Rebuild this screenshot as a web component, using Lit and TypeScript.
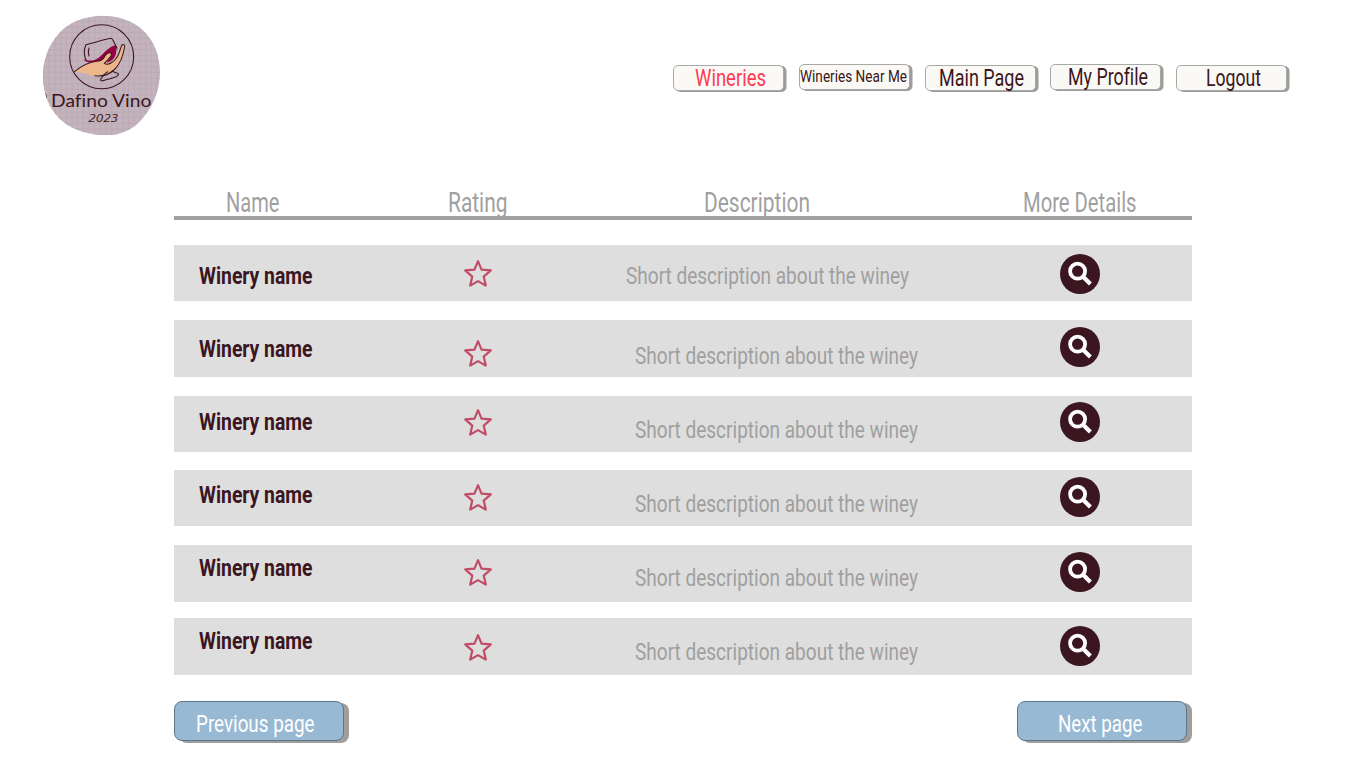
import { LitElement, html, svg, css } from "lit";
import { customElement, property } from "lit/decorators.js";
import { styleMap } from "lit/directives/style-map.js";

/** One line of condensed text, fitted to a given width. */
const label = (text: string, width: number, size: number, weight = 400) => html`
  <svg width=${width} height=${size} overflow="visible" style=${styleMap({ display: "block", fontSize: `${size}px`, fontWeight: `${weight}` })}>
    <text x="0" y=${size} textLength=${width} lengthAdjust="spacingAndGlyphs" fill="currentColor">${text}</text>
  </svg>`;

const star = html`
  <svg width="30" height="30" viewBox="0 0 30 30">
    <path d="M15 2.2 L18.5 10.6 L27.8 11.4 L20.7 17.6 L22.8 26.6 L15 22.1 L7.2 26.6 L9.3 17.6 L2.2 11.4 L11.5 10.6 Z"
      fill="none" stroke="#c04c66" stroke-width="2.2" stroke-linejoin="round" />
  </svg>`;

const magnifier = html`
  <svg width="40" height="40" viewBox="0 0 40 40">
    <circle cx="20" cy="20" r="20" fill="#3b1620" />
    <circle cx="17.6" cy="17.2" r="7.5" fill="none" stroke="#fff" stroke-width="3.8" />
    <path d="M22.6 22.2 L30.4 30" stroke="#fff" stroke-width="4.2" />
  </svg>`;

const gridLines = Array.from({ length: 24 }, (_, i) => 6 + i * 17);

@customElement("winery-logo")
class WineryLogo extends LitElement {
  static styles = css`
    :host { display: block; width: 132px; height: 132px; font-variant-ligatures: none; }
    .name { font: 400 54px Lato, sans-serif; font-variant-ligatures: none; }
    .year { font: italic 400 35px "Open Sans", sans-serif; }
  `;
  render() {
    return html`
      <svg width="132" height="132" viewBox="0 0 396 396">
        <defs>
          <clipPath id="blob">
            <path d="M185 24 C235 20 288 36 320 66 C355 98 372 145 372 195 C371 235 361 268 342 300 C316 342 282 378 222 381 C170 383 118 371 82 342 C43 311 23 262 21 212 C19 163 35 113 68 77 C99 42 141 28 185 24 Z" />
          </clipPath>
        </defs>
        <g clip-path="url(#blob)">
          <rect width="396" height="396" fill="#c3b3bc" />
          ${gridLines.map((p) => svg`<path d="M${p} 0V396M0 ${p}H396" stroke="#b9a8b2" stroke-width="2" fill="none" />`)}
          <path d="M25 253 Q32 260 31 274" fill="none" stroke="#3b1620" stroke-width="3" />
        </g>
        <circle cx="197" cy="146" r="96" fill="none" stroke="#3b1620" stroke-width="3.2" />
        <path d="M143 153 C157 160 173 160 188 149 C205 136 215 118 239 111 C244 125 241 146 229 156 C216 166 197 169 180 166 C163 165 147 163 143 153 Z" fill="#990044" />
        <path d="M116 191 C136 174 157 163 181 160 C196 158 204 154 208 145 C213 136 222 131 226 137 C229 145 217 154 212 164 C220 168 237 157 245 144 C251 134 253 121 257 113 C261 107 267 110 266 117 C261 144 254 166 237 183 C219 201 198 204 166 203 C151 193 132 195 116 191 Z" fill="#ecb88b" />
        <g fill="none" stroke="#3b1620" stroke-width="3.2" stroke-linecap="round" stroke-linejoin="round">
          <path d="M150 156 C143 139 144 122 150 110 C177 103 200 96 224 91 Q229 92 231 97 L243 121" />
          <path d="M159 120 Q155 132 159 144" />
          <path d="M116 191 C136 174 157 163 181 160 C190 159 199 157 203 149 C208 138 219 130 226 137 C229 145 217 154 205 166 C216 175 237 160 245 145 C251 134 253 121 257 113 C261 107 267 110 266 117 C261 144 254 166 237 183 C219 201 198 206 177 203" />
          <path d="M215 191 C204 196 203 204 195 212 C191 219 198 220 207 216 C220 214 230 210 240 206 C248 202 251 197 242 195 Q236 193 228 189" />
        </g>
        <text class="name" x="45" y="297" textLength="301" lengthAdjust="spacingAndGlyphs" fill="#3b1620">Dafino Vino</text>
        <text class="year" x="157" y="341" textLength="89" lengthAdjust="spacingAndGlyphs" fill="#3b1620">2023</text>
      </svg>`;
  }
}

interface Winery { top: number; nameTop: number; starTop: number; textTop: number; textLeft: number; iconTop: number }

// Spacing of each row: gap above it, then the inset of every cell from its top edge.
const wineries: Winery[] = [
  { top: 25, nameTop: 14.8, starTop: 14, textTop: 14.8, textLeft: 0, iconTop: 8.5 },
  { top: 19.3, nameTop: 12.4, starTop: 18.6, textTop: 19.1, textLeft: 9, iconTop: 6.5 },
  { top: 19.3, nameTop: 9.8, starTop: 12, textTop: 18.2, textLeft: 9, iconTop: 5.8 },
  { top: 18, nameTop: 8.6, starTop: 13, textTop: 18, textLeft: 9, iconTop: 6.6 },
  { top: 19.1, nameTop: 6.3, starTop: 12.5, textTop: 16.8, textLeft: 9, iconTop: 6.4 },
  { top: 16.8, nameTop: 6.3, starTop: 14.5, textTop: 17.8, textLeft: 9, iconTop: 7.3 },
];

@customElement("winery-row")
class WineryRow extends LitElement {
  @property({ attribute: false }) row!: Winery;
  static styles = css`
    :host { display: block; }
    .row {
      display: grid; grid-template-columns: 289px 162.5px 434.5px 1fr; align-items: start;
      box-sizing: border-box; height: 56.2px; background: #dedede;
    }
    .name { color: #3b1620; padding-left: 24.6px; }
    .text { color: #a0a0a0; }
    svg { display: block; }
  `;
  render() {
    const r = this.row;
    return html`
      <div class="row">
        <div class="name" style=${styleMap({ paddingTop: `${r.nameTop}px` })}>${label("Winery name", 113.5, 24, 700)}</div>
        <div style=${styleMap({ paddingTop: `${r.starTop}px` })}>${star}</div>
        <div class="text" style=${styleMap({ paddingTop: `${r.textTop}px`, paddingLeft: `${r.textLeft}px` })}>
          ${label("Short description about the winey", 283, 24, 400)}
        </div>
        <div style=${styleMap({ paddingTop: `${r.iconTop}px` })}>${magnifier}</div>
      </div>`;
  }
}

const links = [
  { text: "Wineries", width: 71, size: 23.5, drop: 1, left: 22, baseline: 20.2, active: true },
  { text: "Wineries Near Me", width: 107, size: 17.3, drop: 0, left: 0.8, baseline: 18.2 },
  { text: "Main Page", width: 85, size: 23.5, drop: 1, left: 14.2, baseline: 20.2 },
  { text: "My Profile", width: 80, size: 23.5, drop: 0, left: 17.6, baseline: 20.2 },
  { text: "Logout", width: 55, size: 23.5, drop: 1, left: 30.3, baseline: 20.2 },
];

@customElement("app-root")
class AppRoot extends LitElement {
  static styles = css`
    :host {
      display: block; width: 1366px; height: 768px; overflow: hidden; background: #fff;
      font-family: Roboto, sans-serif; font-variant-ligatures: none;
    }
    .header { display: flex; box-sizing: border-box; height: 184px; padding: 8px 0 0 36px; }
    .nav { display: flex; align-items: flex-start; gap: 14.8px; margin: 56.3px 0 0 505px; }
    .link {
      box-sizing: border-box; width: 111px; height: 25.6px; border: 1px solid #a8a8a6; border-radius: 5px;
      background: #faf9f5; box-shadow: 2.5px 1px 0 #9c9c9c; color: #3b1620;
    }
    .active { color: #fb3b52; }
    .table { width: 1018px; margin-left: 174px; }
    .head {
      display: grid; grid-template-columns: 222.5px 256px 318.7px 1fr; box-sizing: border-box;
      height: 36px; padding: 1.2px 0 0 51.5px; border-bottom: 4px solid #a0a0a0; color: #a0a0a0;
    }
    .pager { display: flex; justify-content: space-between; width: 1013px; margin: 26.1px 0 0 174px; }
    .page {
      box-sizing: border-box; width: 170px; height: 40px; border: 1px solid #5f7686; border-radius: 8px;
      background: #97b9d4; box-shadow: 5px 2px 0 #9e9e9e; color: #fff; padding-top: 6px;
    }
    .prev { padding-left: 21px; }
    .next { padding-left: 40px; }
  `;
  render() {
    return html`
      <header class="header">
        <winery-logo></winery-logo>
        <nav class="nav">
          ${links.map((l) => html`
            <div class="link ${l.active ? "active" : ""}" style=${styleMap({ marginTop: `${l.drop}px` })}>
              <div style=${styleMap({ marginTop: `${l.baseline - l.size - 1}px`, marginLeft: `${l.left - 1}px` })}>
                ${label(l.text, l.width, l.size, 400)}
              </div>
            </div>`)}
        </nav>
      </header>
      <main class="table">
        <div class="head">
          ${label("Name", 53.5, 26.8, 400)} ${label("Rating", 59.5, 26.8, 400)}
          ${label("Description", 106, 26.8, 400)} ${label("More Details", 113.5, 26.8, 400)}
        </div>
        ${wineries.map((w) => html`<winery-row .row=${w} style=${styleMap({ marginTop: `${w.top}px` })}></winery-row>`)}
      </main>
      <footer class="pager">
        <div class="page prev">${label("Previous page", 118.5, 24, 400)}</div>
        <div class="page next">${label("Next page", 84.5, 24, 400)}</div>
      </footer>`;
  }
}
